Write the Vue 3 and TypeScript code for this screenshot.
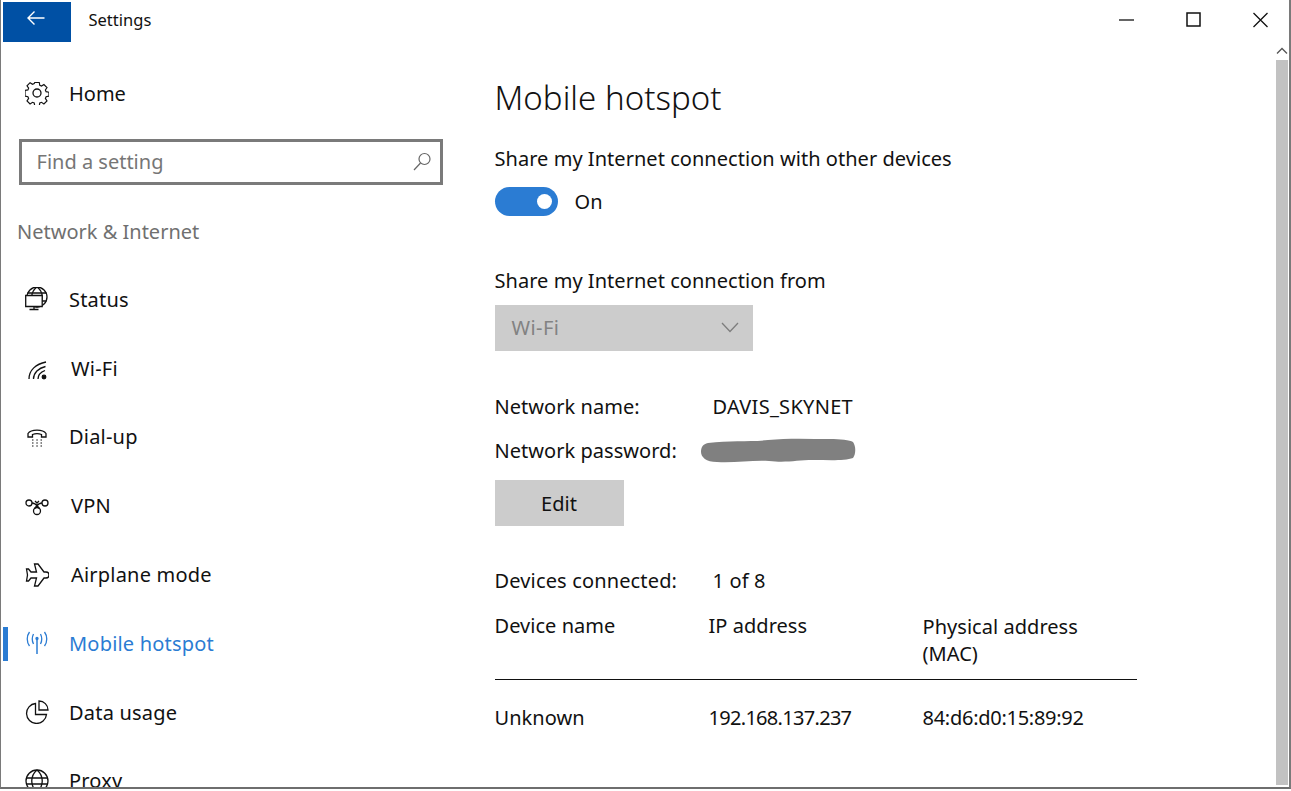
<template>
  <div class="window">
    <header class="titlebar">
      <button class="back" aria-label="Back">
        <svg width="20" height="16" viewBox="0 0 20 16" fill="none" stroke="#fff" stroke-width="1.4">
          <path d="M18.5 8H2M8.5 1.5 2 8l6.5 6.5" />
        </svg>
      </button>
      <span class="app-title">Settings</span>
      <div class="caption">
        <svg width="16" height="16" viewBox="0 0 16 16" fill="none" stroke="#111" stroke-width="1.3"><path d="M0 8h15" /></svg>
        <svg width="16" height="16" viewBox="0 0 16 16" fill="none" stroke="#111" stroke-width="1.5"><rect x="1" y="1" width="13" height="13" /></svg>
        <svg width="16" height="16" viewBox="0 0 16 16" fill="none" stroke="#111" stroke-width="1.3"><path d="M.5 1l14 14M14.500 1l-14 14" /></svg>
      </div>
    </header>

    <div class="body">
      <nav class="sidebar">
        <div class="home">
          <svg class="icon" viewBox="0 0 24 24" fill="none" stroke="currentColor" stroke-width="1.3">
            <circle cx="12" cy="12" r="4" />
            <path d="M9.500 1h5l.6 3.200 1.900.8 2.700-1.800 3.400 3.400-1.800 2.700.8 1.900 3.200.6v4.400l-3.200.6-.8 1.900 1.800 2.700-3.400 3.400-2.700-1.800-1.900.8-.6 3.200h-5l-.6-3.200-1.900-.8-2.700 1.800-3.400-3.400 1.800-2.700-.8-1.900-3.200-.6V9.800l3.200-.6.8-1.900-1.800-2.700 3.400-3.400 2.700 1.800 1.900-.8z" transform="translate(1.200 .6) scale(.9)" />
          </svg>
          <span>Home</span>
        </div>
        <div class="search">
          <span>Find a setting</span>
          <svg width="19" height="19" viewBox="0 0 19 19" fill="none" stroke="#666" stroke-width="1.2">
            <circle cx="11.500" cy="7" r="5.500" /><path d="M7.500 11 1 18" />
          </svg>
        </div>
        <div class="group">Network &amp; Internet</div>
        <ul class="items">
          <li v-for="item in items" :key="item.label" :class="{ active: item.label === 'Mobile hotspot' }">
            <svg class="icon" viewBox="0 0 24 24" fill="none" stroke="currentColor" stroke-width="1.3" v-html="item.icon" />
            <span :class="{ inset: item.inset }">{{ item.label }}</span>
          </li>
        </ul>
      </nav>

      <main class="content">
        <h1>Mobile hotspot</h1>
        <div class="label first">Share my Internet connection with other devices</div>
        <div class="toggle-row">
          <span class="toggle"><i /></span>
          <span>On</span>
        </div>
        <div class="label from">Share my Internet connection from</div>
        <div class="select">
          <span>Wi-Fi</span>
          <svg width="18" height="11" viewBox="0 0 18 11" fill="none" stroke="#7d7d7d" stroke-width="1.300"><path d="M1 1l8 8.500L17 1" /></svg>
        </div>
        <div class="pair name">
          <span>Network name:</span>
          <span class="ssid">DAVIS_SKYNET</span>
        </div>
        <div class="pair password">
          <span>Network password:</span>
          <svg width="156" height="26" viewBox="0 0 156 26" fill="#808080">
            <path d="M8 6C30 3 50 5 68 3c20-2 42-1 62-1 10 0 20 1 23 3 3 4 3 12 0 16-8 3-24 2-40 2-16 0-26 3-44 1-16-1-34 2-52 1C6 25 1 20 1 15 1 10 3 7 8 6z" />
          </svg>
        </div>
        <button class="edit">Edit</button>
        <div class="pair devices">
          <span>Devices connected:</span>
          <span>1 of 8</span>
        </div>
        <div class="table head">
          <span>Device name</span>
          <span>IP address</span>
          <span class="mac">Physical address<br />(MAC)</span>
        </div>
        <div class="table row">
          <span>Unknown</span>
          <span class="ip">192.168.137.237</span>
          <span class="hw">84:d6:d0:15:89:92</span>
        </div>
      </main>

      <aside class="scrollbar">
        <svg class="up" width="12" height="8" viewBox="0 0 12 8" fill="none" stroke="#555" stroke-width="1.300"><path d="M1 6.500 6 1.500l5 5" /></svg>
        <div class="thumb" />
      </aside>
    </div>
  </div>
</template>

<script setup lang="ts">
interface NavItem {
  label: string
  icon: string
  inset?: boolean
}

const items: NavItem[] = [
  {
    label: 'Status',
    icon: '<circle cx="12" cy="10" r="10"/><path d="M12 0c-7 5-7 15 0 20M12 0c7 5 7 15 0 20M2.500 6h19M2.500 14h19"/><path d="M.7 8.500h16.500v11H.7zM9 19.500v3M4.500 22.500h9" fill="#fff"/>',
  },
  {
    label: 'Wi-Fi',
    inset: true,
    icon: '<path d="M4 23C4 14 11 8 21 6M8.500 23c0-6 5-11 12-12.500M13 23c0-4 3-7 7-8.500"/><circle cx="19" cy="21" r="1.800" fill="currentColor"/>',
  },
  {
    label: 'Dial-up',
    icon: '<path d="M3 12V8.500C6 4 18 4 21 8.500V12h-4.500V9.500c-2.500-1-6.500-1-9 0V12z"/><path d="M7 15h1.500M11.300 15h1.500M15.500 15h1.500M7 18h1.500M11.300 18h1.500M15.500 18h1.500M7 21h1.500M11.300 21h1.500M15.500 21h1.500" stroke-width="1.200"/>',
  },
  {
    label: 'VPN',
    inset: true,
    icon: '<circle cx="4" cy="9" r="3"/><circle cx="20" cy="9" r="3"/><circle cx="12" cy="17" r="3.500"/><path d="M7 9c4 0 5 3 7.500 5.500M17 9c-4 0-5 3-7.500 5.500M10 7l2 2 2-2"/>',
  },
  {
    label: 'Airplane mode',
    inset: true,
    icon: '<path d="M13 1h-3.500l2 8H6L3.500 6H1.500l1 6-1 6h2L6 15h5.500l-2 8H13l6-8h2c2 0 3-1.500 3-3s-1-3-3-3h-2z"/>',
  },
  {
    label: 'Mobile hotspot',
    icon: '<path d="M12 8v15" stroke-width="1.500"/><circle cx="12" cy="7.500" r="1" fill="currentColor"/><path d="M8.500 3c-1.500 3-1.500 7 0 10M15.500 3c1.500 3 1.500 7 0 10M4.500 1c-3 4-3 10 0 14M19.500 1c3 4 3 10 0 14"/>',
  },
  {
    label: 'Data usage',
    icon: '<path d="M10.500 3.500a10 10 0 1 0 11 11h-11z"/><path d="M14 1a9 9 0 0 1 9 9h-9z"/>',
  },
  {
    label: 'Proxy',
    icon: '<circle cx="12" cy="12" r="11"/><path d="M12 1c-7 6-7 16 0 22M12 1c7 6 7 16 0 22M1.500 9h21M1.500 15h21"/>',
  },
]
</script>

<style>
html,
body {
  margin: 0;
  background: #fff;
  overflow: hidden;
}
</style>

<style scoped>
.window {
  box-sizing: border-box;
  width: 1291px;
  height: 789px;
  display: flex;
  flex-direction: column;
  background: #fff;
  border-left: 1.5px solid #7a7a7a;
  border-right: 2px solid #7a7a7a;
  border-bottom: 2px solid #6e6e6e;
  color: #111;
  font-family: "Noto Sans", "Open Sans", sans-serif;
  font-size: 20px;
  overflow: hidden;
}

.titlebar {
  flex: none;
  height: 42px;
  display: flex;
  align-items: center;
}

.back {
  width: 68px;
  height: 40px;
  margin: 2px 0 0 1.500px;
  padding: 0 2px 5px 0;
  border: 0;
  background: #0050a4;
}

.app-title {
  margin: 0 0 3px 18px;
  font-size: 16.500px;
}

.caption {
  margin-left: auto;
  display: flex;
  gap: 51px;
  padding: 0 20px 3px 0;
}

.body {
  flex: 1;
  min-height: 0;
  display: flex;
}

.sidebar {
  flex: none;
  width: 493.500px;
  overflow: hidden;
}

.icon {
  flex: none;
  width: 24px;
  height: 24px;
}

.home {
  display: flex;
  align-items: center;
  gap: 20px;
  height: 32px;
  margin: 35px 0 0 24px;
}

.search {
  box-sizing: border-box;
  display: flex;
  align-items: center;
  justify-content: space-between;
  width: 424px;
  height: 46px;
  margin: 30px 0 0 18px;
  padding: 0 8px 2px 14.500px;
  border: 3px solid #7a7a7a;
  color: #767676;
}

.group {
  margin: 31px 0 0 16px;
  line-height: 32px;
  color: #707070;
}

.items {
  list-style: none;
  margin: 17px 0 0;
  padding: 0;
  letter-spacing: 0.2px;
}

.items li {
  box-sizing: border-box;
  display: flex;
  align-items: center;
  gap: 20.500px;
  height: 68.800px;
  padding-left: 23.500px;
  position: relative;
}

.items li .inset {
  margin-left: 2px;
}

.items li.active {
  color: #2b7cd3;
}

.items li.active::before {
  content: "";
  position: absolute;
  left: 1.500px;
  top: 18px;
  width: 5px;
  height: 34px;
  background: #2b7cd3;
}

.content {
  flex: 1;
  min-width: 0;
  letter-spacing: 0.04px;
}

h1 {
  margin: 33px 0 0;
  font-size: 33px;
  font-weight: 300;
  line-height: 46px;
}

.label {
  line-height: 30px;
}

.first {
  margin-top: 23px;
}

.toggle-row {
  display: flex;
  align-items: center;
  gap: 17px;
  height: 30px;
  margin-top: 12px;
}

.toggle {
  box-sizing: border-box;
  width: 63px;
  height: 29px;
  padding-right: 6px;
  display: flex;
  align-items: center;
  justify-content: flex-end;
  border-radius: 15px;
  background: #2b7cd3;
}

.toggle i {
  width: 15px;
  height: 15px;
  border-radius: 50%;
  background: #fff;
}

.from {
  margin-top: 50px;
}

.select {
  box-sizing: border-box;
  display: flex;
  align-items: center;
  justify-content: space-between;
  width: 258px;
  height: 46px;
  margin-top: 9px;
  padding: 0 14px 2px 17px;
  background: #ccc;
  color: #828282;
}

.select span {
  letter-spacing: 0.4px;
}

.pair {
  display: grid;
  grid-template-columns: 218px auto;
  align-items: center;
  height: 30px;
}

.name {
  margin-top: 40px;
}

.ssid {
  letter-spacing: 0.3px;
}

.password {
  grid-template-columns: 205px auto;
  margin-top: 14px;
}

.edit {
  display: block;
  width: 129px;
  height: 46px;
  margin-top: 15px;
  padding: 0;
  border: 0;
  background: #ccc;
  color: #111;
  font: inherit;
}

.devices {
  margin-top: 39px;
  letter-spacing: 0.15px;
}

.table {
  display: grid;
  grid-template-columns: repeat(3, 214px);
  width: 642px;
  line-height: 27px;
}

.head {
  height: 85px;
  padding-top: 17px;
  box-sizing: border-box;
  border-bottom: 1px solid #111;
}

.mac {
  padding-top: 1px;
}

.row {
  margin-top: 24px;
}

.ip {
  letter-spacing: -0.7px;
}

.hw {
  letter-spacing: -0.27px;
}

.scrollbar {
  flex: none;
  width: 12px;
  margin-right: 1px;
  margin-bottom: 2px;
  display: flex;
  flex-direction: column;
  align-items: center;
}

.up {
  margin-top: 5px;
}

.thumb {
  width: 100%;
  flex: 1;
  margin-top: 5px;
  background: #c2c2c2;
}
</style>
